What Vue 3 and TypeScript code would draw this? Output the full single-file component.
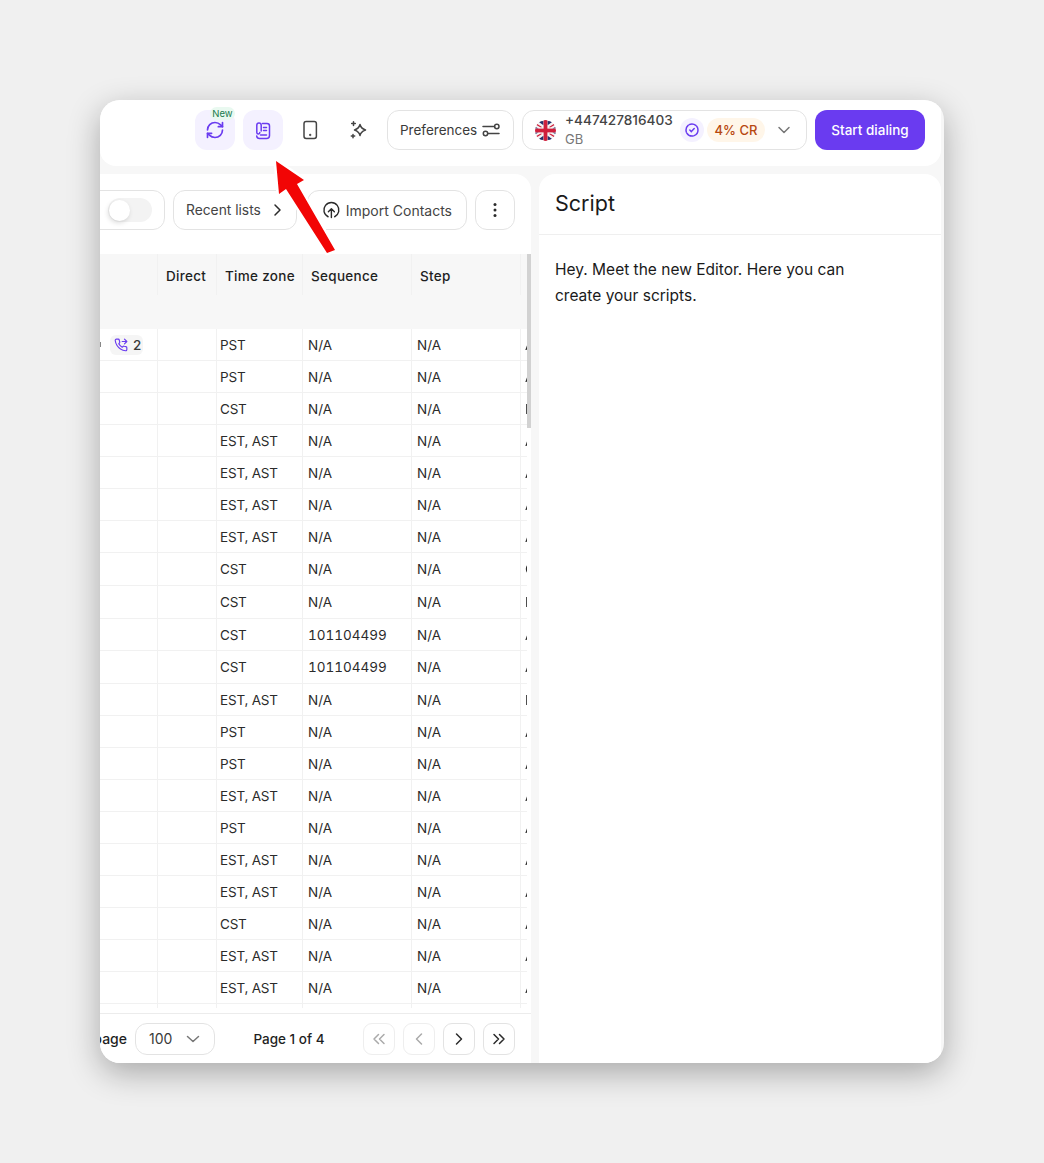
<script setup lang="ts">
interface Row {
  tz: string
  seq: string
  last: string
  tall?: boolean
}

const rows: Row[] = [
  { tz: 'PST', seq: 'N/A', last: 'A' },
  { tz: 'PST', seq: 'N/A', last: 'A' },
  { tz: 'CST', seq: 'N/A', last: 'E' },
  { tz: 'EST, AST', seq: 'N/A', last: 'A' },
  { tz: 'EST, AST', seq: 'N/A', last: 'A' },
  { tz: 'EST, AST', seq: 'N/A', last: 'A' },
  { tz: 'EST, AST', seq: 'N/A', last: 'A' },
  { tz: 'CST', seq: 'N/A', last: 'C', tall: true },
  { tz: 'CST', seq: 'N/A', last: 'E', tall: true },
  { tz: 'CST', seq: '101104499', last: 'A' },
  { tz: 'CST', seq: '101104499', last: 'A', tall: true },
  { tz: 'EST, AST', seq: 'N/A', last: 'E' },
  { tz: 'PST', seq: 'N/A', last: 'A' },
  { tz: 'PST', seq: 'N/A', last: 'A' },
  { tz: 'EST, AST', seq: 'N/A', last: 'A' },
  { tz: 'PST', seq: 'N/A', last: 'A' },
  { tz: 'EST, AST', seq: 'N/A', last: 'A' },
  { tz: 'EST, AST', seq: 'N/A', last: 'A' },
  { tz: 'CST', seq: 'N/A', last: 'A' },
  { tz: 'EST, AST', seq: 'N/A', last: 'A' },
  { tz: 'EST, AST', seq: 'N/A', last: 'A' },
  { tz: '', seq: '', last: '' },
]
</script>

<template>
  <div class="page">
    <div class="window">
      <header class="topbar">
        <button class="icon-btn active">
          <span class="new-tag">New</span>
          <svg width="20" height="20" viewBox="0 0 24 24" class="stroke purple">
            <path d="M3 12a9 9 0 0 1 9-9 9.75 9.75 0 0 1 6.74 2.74L21 8" />
            <path d="M21 3v5h-5" />
            <path d="M21 12a9 9 0 0 1-9 9 9.75 9.75 0 0 1-6.74-2.74L3 16" />
            <path d="M8 16H3v5" />
          </svg>
        </button>
        <button class="icon-btn active">
          <svg width="20" height="20" viewBox="0 0 20 20" class="stroke purple thin">
            <path d="M9.500 3.500H14a2.500 2.500 0 0 1 2.500 2.500v9.500a3 3 0 0 1-3 3H6.500A2.800 2.800 0 0 1 3.700 16" />
            <path d="M8.200 11V5.300a2.200 2.200 0 0 0-4.400 0v7.200a1.500 1.500 0 0 0 3 0" />
            <path d="M10.500 7.500h3M10.500 10.500h3M7.500 15h6" />
          </svg>
        </button>
        <button class="icon-btn">
          <svg width="20" height="20" viewBox="0 0 20 20" class="stroke grey thin">
            <rect x="3" y="1.500" width="12.400" height="17" rx="2.200" />
            <circle cx="9.200" cy="15" r=".4" />
          </svg>
        </button>
        <button class="icon-btn">
          <svg width="20" height="20" viewBox="0 0 20 20" class="stroke grey thin">
            <path d="M11 4.500c.7 3 1.800 4.200 5.500 5.500-3.700 1.300-4.800 2.500-5.500 5.500-.7-3-1.800-4.200-5.500-5.500 3.700-1.300 4.800-2.500 5.500-5.500Z" />
            <path d="M4.500 1.800v3.600M2.700 3.600h3.600M4 14.400v3.400M2.300 16.100h3.400" />
          </svg>
        </button>
        <button class="pill prefs">
          Preferences
          <svg width="20" height="20" viewBox="0 0 20 20" class="stroke grey thin">
            <path d="M2 6.500h11.500M7 13.500h11" />
            <circle cx="15.800" cy="6.500" r="2.200" />
            <circle cx="4.500" cy="13.500" r="2.200" />
          </svg>
        </button>
        <div class="pill caller">
          <svg class="flag" width="21" height="21" viewBox="0 0 20 20">
            <defs>
              <clipPath id="flag-clip"><circle cx="10" cy="10" r="10" /></clipPath>
            </defs>
            <g clip-path="url(#flag-clip)">
              <rect width="20" height="20" fill="#f4f4f4" />
              <path d="M1 3 7 7H5L0 4ZM19 3l-6 4h2l5-3ZM1 17l6-4H5l-5 3ZM19 17l-6-4h2l5 3Z" fill="#d01f3c" />
              <path d="M3 1.500 8 5V1ZM17 1.500 12 5V1ZM3 18.500 8 15v4ZM17 18.500 12 15v4ZM0 6.500 3.500 8H0ZM20 6.500 16.500 8H20ZM0 13.500 3.500 12H0ZM20 13.500 16.500 12H20Z" fill="#25306b" />
              <rect x="8.200" width="3.600" height="20" fill="#d01f3c" />
              <rect y="8.200" width="20" height="3.600" fill="#d01f3c" />
            </g>
          </svg>
          <div class="caller-id">
            <span class="number">+447427816403</span>
            <span class="country">GB</span>
          </div>
          <span class="verified">
            <svg width="16" height="16" viewBox="0 0 16 16" class="stroke purple thin">
              <circle cx="8" cy="8" r="6" stroke-dasharray="7 1.200" />
              <path d="m5.800 8 1.600 1.600 2.800-3" />
            </svg>
          </span>
          <span class="rate">4% CR</span>
          <svg class="caret" width="16" height="16" viewBox="0 0 16 16">
            <path d="m3 5.500 5 5 5-5" />
          </svg>
        </div>
        <button class="start">Start dialing</button>
      </header>

      <main class="content">
        <section class="contacts">
          <div class="toolbar">
            <div class="pill toggle-box">
              <span class="toggle"><span class="knob"></span></span>
            </div>
            <button class="pill recent">
              Recent lists
              <svg width="16" height="16" viewBox="0 0 16 16" class="stroke dark thin">
                <path d="m6 3 5 5-5 5" />
              </svg>
            </button>
            <button class="pill import">
              <svg width="20" height="20" viewBox="0 0 20 20" class="stroke dark thin">
                <path d="M6.500 17.200A8 8 0 1 1 13.500 17.200" />
                <path d="M10 18v-9M6.800 11.800 10 8.600l3.200 3.200" />
              </svg>
              Import Contacts
            </button>
            <button class="pill more">
              <svg width="16" height="16" viewBox="0 0 16 16">
                <circle cx="8" cy="2.500" r="1.500" />
                <circle cx="8" cy="8" r="1.500" />
                <circle cx="8" cy="13.500" r="1.500" />
              </svg>
            </button>
          </div>

          <div class="table">
            <div class="thead">
              <div class="grid head-row">
                <span></span>
                <span>Direct</span>
                <span>Time zone</span>
                <span>Sequence</span>
                <span>Step</span>
                <span></span>
              </div>
            </div>
            <div class="tbody">
              <div
                v-for="(row, i) in rows"
                :key="i"
                class="grid body-row"
                :class="{ tall: row.tall }"
              >
                <span class="first">
                  <template v-if="i === 0">
                    <i class="cut-mark"></i>
                    <span class="calls">
                      <svg width="14" height="14" viewBox="0 0 24 24" class="stroke purple">
                        <path d="M22 16.900v3a2 2 0 0 1-2.200 2 19.800 19.800 0 0 1-8.600-3.100 19.500 19.500 0 0 1-6-6A19.800 19.800 0 0 1 2.100 4.200 2 2 0 0 1 4.100 2h3a2 2 0 0 1 2 1.700c.1 1 .4 1.900.7 2.800a2 2 0 0 1-.5 2.100L8.100 9.900a16 16 0 0 0 6 6l1.300-1.300a2 2 0 0 1 2.100-.4c.9.300 1.800.6 2.800.7a2 2 0 0 1 1.700 2Z" />
                        <path d="M14 6h8M18 2l4 4-4 4" />
                      </svg>
                      2
                    </span>
                  </template>
                </span>
                <span></span>
                <span class="tz">{{ row.tz }}</span>
                <span class="num">{{ row.seq }}</span>
                <span>{{ row.tz ? 'N/A' : '' }}</span>
                <span class="cut">{{ row.last }}</span>
              </div>
            </div>
            <div class="thumb"></div>
          </div>

          <footer class="pager">
            <span class="per-page">Rows per page</span>
            <div class="pill select">
              100
              <svg class="caret" width="16" height="16" viewBox="0 0 16 16">
                <path d="m2.500 5.500 5.500 5 5.500-5" />
              </svg>
            </div>
            <span class="page-label">Page 1 of 4</span>
            <div class="pager-btns">
              <button class="pill nav off">
                <svg width="16" height="16" viewBox="0 0 16 16"><path d="M7.500 3.500 3 8l4.500 4.500M13 3.500 8.500 8l4.500 4.500" /></svg>
              </button>
              <button class="pill nav off">
                <svg width="16" height="16" viewBox="0 0 16 16"><path d="M10.500 3 5.500 8l5 5" /></svg>
              </button>
              <button class="pill nav">
                <svg width="16" height="16" viewBox="0 0 16 16"><path d="m5.500 3 5 5-5 5" /></svg>
              </button>
              <button class="pill nav">
                <svg width="16" height="16" viewBox="0 0 16 16"><path d="M3 3.500 7.500 8 3 12.500M8.500 3.500 13 8l-4.500 4.500" /></svg>
              </button>
            </div>
          </footer>
        </section>

        <aside class="script">
          <h2>Script</h2>
          <p>Hey. Meet the new Editor. Here you can create your scripts.</p>
        </aside>
      </main>

      <svg class="arrow" width="80" height="110" viewBox="0 0 80 110">
        <path
          d="M4 5 7 38 14 33 55 97 63 94 25 28 32 24Z"
          fill="#f20505"
          stroke="#fff"
          stroke-width="5"
          stroke-linejoin="round"
          paint-order="stroke"
        />
      </svg>
    </div>
  </div>
</template>

<style>
html,
body {
  margin: 0;
  background: #f0f0f0;
}
</style>

<style scoped>
.page {
  box-sizing: border-box;
  width: 1044px;
  height: 1163px;
  padding: 100px;
  font-family: Inter, 'Liberation Sans', sans-serif;
  font-size: 14px;
  color: #1f1f1f;
}
.window {
  position: relative;
  display: flex;
  flex-direction: column;
  gap: 8px;
  height: 963px;
  padding-right: 3px;
  overflow: hidden;
  background: #f7f7f7;
  border-radius: 20px;
  box-shadow: 0 10px 32px rgba(0, 0, 0, 0.3);
}
button {
  font: inherit;
  color: inherit;
  background: none;
  border: 0;
  padding: 0;
}
.stroke {
  fill: none;
  stroke: currentColor;
  stroke-width: 2;
  stroke-linecap: round;
  stroke-linejoin: round;
}
.stroke.thin {
  stroke-width: 1.500;
}
.purple {
  color: #6a3bf0;
}
.grey {
  color: #444;
}
.dark {
  color: #2b2b2b;
}

.topbar {
  display: flex;
  flex: none;
  align-items: center;
  justify-content: flex-end;
  gap: 8px;
  height: 66px;
  padding: 0 16px 6px;
  box-sizing: border-box;
  background: #fff;
  border-radius: 0 0 16px 16px;
}
.icon-btn {
  position: relative;
  display: flex;
  align-items: center;
  justify-content: center;
  width: 40px;
  height: 40px;
  border-radius: 12px;
}
.icon-btn.active {
  background: #f4f1ff;
}
.new-tag {
  position: absolute;
  top: -3px;
  right: 0;
  width: 25px;
  font-size: 9.500px;
  line-height: 13px;
  font-weight: 400;
  text-align: center;
  color: #17794c;
  background: #e9f9f0;
  border-radius: 7px;
}
.pill {
  display: flex;
  align-items: center;
  box-sizing: border-box;
  height: 40px;
  white-space: nowrap;
  background: #fff;
  border: 1px solid #e3e3e3;
  border-radius: 12px;
}
.prefs {
  justify-content: space-between;
  width: 127px;
  padding: 0 12px;
  font-size: 13.500px;
  color: #3a3a3a;
}
.caller {
  width: 285px;
  padding: 0 12px;
}
.flag {
  flex: none;
  margin-right: 9px;
}
.caller-id {
  display: flex;
  flex-direction: column;
  width: 113px;
  margin-right: 2px;
  margin-top: -1px;
}
.number {
  font-size: 13.600px;
  line-height: 19px;
  font-weight: 500;
  color: #444;
}
.country {
  font-size: 13px;
  line-height: 18px;
  color: #777;
}
.verified {
  display: flex;
  align-items: center;
  justify-content: center;
  flex: none;
  width: 24px;
  height: 24px;
  margin-right: 3px;
  background: #f4f1ff;
  border-radius: 50%;
}
.rate {
  flex: none;
  width: 58px;
  line-height: 24px;
  font-weight: 500;
  font-size: 13px;
  text-align: center;
  color: #b7480f;
  background: #fff6e9;
  border-radius: 12px;
}
.caret {
  flex: none;
  fill: none;
  stroke: #777;
  stroke-width: 1.500;
  stroke-linecap: round;
  stroke-linejoin: round;
}
.caller .caret {
  margin-left: 11px;
}
.start {
  width: 110px;
  height: 40px;
  font-size: 13.500px;
  font-weight: 500;
  color: #fff;
  background: #6a3bf0;
  border-radius: 12px;
}

.content {
  display: flex;
  flex: 1;
  gap: 8px;
  min-height: 0;
}
.contacts {
  display: flex;
  flex-direction: column;
  flex: none;
  width: 431px;
  overflow: hidden;
  background: #fff;
  border-radius: 0 16px 0 0;
}
.toolbar {
  display: flex;
  flex: none;
  justify-content: flex-end;
  gap: 8px;
  padding: 16px 16px 24px;
}
.toggle-box {
  flex: none;
  justify-content: flex-end;
  width: 100px;
  padding-right: 12px;
}
.toggle {
  display: block;
  width: 44px;
  height: 24px;
  background: #f3f3f3;
  border-radius: 12px;
}
.knob {
  display: block;
  width: 21px;
  height: 21px;
  margin: 1.500px 0 0 1px;
  background: #fff;
  border-radius: 50%;
  box-shadow: -1px 2px 5px rgba(0, 0, 0, 0.14);
}
.recent {
  flex: none;
  justify-content: space-between;
  width: 124px;
  padding: 0 11px 0 12px;
  font-size: 13.800px;
  color: #444;
}
.import {
  flex: none;
  gap: 5px;
  width: 160px;
  margin-left: 2px;
  padding: 0 14px;
  color: #444;
}
.more {
  flex: none;
  justify-content: center;
  width: 40px;
  fill: #2b2b2b;
}

.table {
  position: relative;
  display: flex;
  flex-direction: column;
  flex: 1;
  min-height: 0;
  width: 431px;
  padding-right: 4px;
  margin-bottom: 5px;
  box-sizing: border-box;
  overflow: hidden;
}
.grid {
  display: grid;
  grid-template-columns: 58px 59px 86px 109px 109px 6px;
}
.grid > span {
  min-width: 0;
  overflow: hidden;
}
.thead {
  flex: none;
  height: 75px;
  background: #f7f7f7;
}
.head-row {
  height: 41px;
  line-height: 44px;
  font-weight: 500;
  font-size: 13.500px;
  letter-spacing: 0.3px;
}
.head-row > span {
  padding-left: 8px;
  border-right: 1px solid #f1f1f1;
}
.head-row > span:last-child {
  border-right: 0;
}
.tbody {
  flex: 1;
  min-height: 0;
  overflow: hidden;
}
.body-row {
  box-sizing: border-box;
  height: 32px;
  line-height: 33px;
  font-size: 13.500px;
  color: #2b2b2b;
  border-bottom: 1px solid #f1f1f1;
}
.body-row.tall {
  height: 33px;
}
.body-row > span {
  padding-left: 5px;
  border-right: 1px solid #f1f1f1;
  white-space: nowrap;
}
.body-row > .tz {
  padding-left: 3px;
  letter-spacing: -0.2px;
}
.body-row > .num {
  font-variant-numeric: tabular-nums;
}
.body-row > .cut {
  padding-left: 4px;
  border-right: 0;
  will-change: transform;
}
.body-row > .first {
  position: relative;
  padding-left: 0;
}
.cut-mark {
  position: absolute;
  top: 13px;
  left: 0;
  width: 1px;
  height: 5px;
  background: #888;
}
.calls {
  position: absolute;
  top: 6px;
  left: 10px;
  display: flex;
  align-items: center;
  gap: 5px;
  width: 33px;
  height: 20px;
  padding-left: 4px;
  box-sizing: border-box;
  line-height: 20px;
  font-weight: 500;
  color: #3a3a3a;
  background: #f5f5f5;
  border-radius: 6px;
}
.thumb {
  position: absolute;
  top: 0;
  right: 0;
  width: 4px;
  height: 174px;
  background: #d2d2d2;
}

.pager {
  display: flex;
  flex: none;
  align-items: center;
  justify-content: flex-end;
  height: 50px;
  padding: 0 16px 0 0;
  box-sizing: border-box;
  border-top: 1px solid #ececec;
}
.per-page {
  flex: none;
  margin-right: 8px;
  font-weight: 500;
  white-space: nowrap;
}
.select {
  flex: none;
  justify-content: space-between;
  width: 80px;
  height: 32px;
  padding: 0 13px;
  color: #3a3a3a;
}
.page-label {
  flex: none;
  width: 148px;
  text-align: center;
  font-weight: 500;
  font-size: 13.500px;
}
.pager-btns {
  display: flex;
  flex: none;
  gap: 8px;
}
.nav {
  justify-content: center;
  width: 32px;
  height: 32px;
  border-radius: 9px;
}
.nav svg {
  fill: none;
  stroke: #2b2b2b;
  stroke-width: 1.500;
  stroke-linecap: round;
  stroke-linejoin: round;
}
.nav.off {
  border-color: #eee;
}
.nav.off svg {
  stroke: #aaa;
}

.script {
  flex: 1;
  background: #fff;
  border-radius: 16px 16px 0 0;
}
.script h2 {
  margin: 0;
  padding: 0 16px;
  height: 60px;
  line-height: 58px;
  font-size: 21.500px;
  font-weight: 400;
  color: #1a1a1a;
  border-bottom: 1px solid #efefef;
}
.script p {
  width: 310px;
  margin: 22px 0 0 16px;
  font-size: 15.500px;
  line-height: 26px;
  color: #1a1a1a;
}

.arrow {
  position: absolute;
  top: 56px;
  left: 172px;
}
</style>
